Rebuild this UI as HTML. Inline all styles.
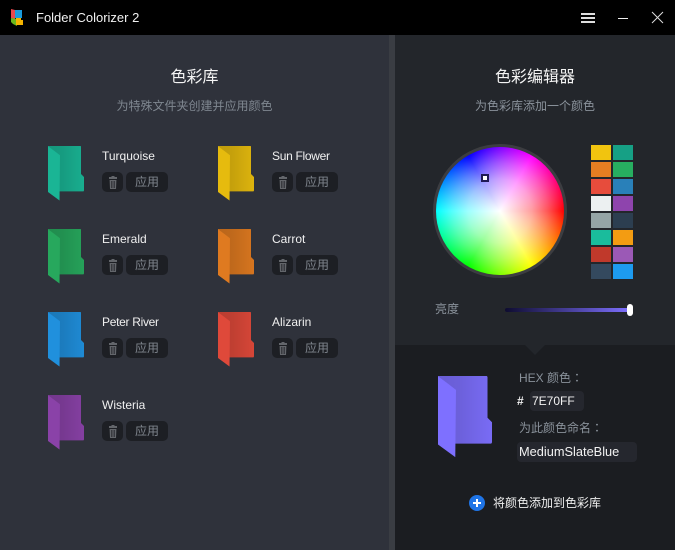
<!DOCTYPE html>
<html><head><meta charset="utf-8">
<style>
*{margin:0;padding:0;box-sizing:border-box}
html,body{width:675px;height:550px;overflow:hidden;background:#000}
body{position:relative;font-family:"Liberation Sans","Noto Sans CJK SC",sans-serif;color:#fff}
.a{position:absolute}
.t{position:absolute;white-space:nowrap;line-height:16px}
.c{text-align:center}
.b{position:absolute;background:#1d1f24;border-radius:5px;height:20px}
.ap{position:absolute;width:42px;height:20px;background:#1d1f24;border-radius:5px;color:#7f858d;font-size:12px;line-height:21px;text-align:center}
.s{position:absolute;width:20px;height:15px}
.tc{font-family:"Noto Sans CJK TC",sans-serif}
.f{position:absolute;width:36px;height:55px}
.f i{position:absolute;left:0;top:0;width:100%;height:100%;display:block}
.f .k{background:linear-gradient(90deg,rgba(0,0,0,.17),rgba(0,0,0,.14) 40%,rgba(0,0,0,.04)),var(--c);clip-path:polygon(0 0,90.3% 0,91.7% 1%,91.7% 50.9%,100% 56.4%,100% 81%,98.6% 82.4%,30.6% 82.4%,30.6% 16.4%)}
.f .p{background:var(--c);clip-path:polygon(0 0,33.3% 16.9%,32% 99%,0 83.6%)}
</style></head><body>
<div class="a" style="left:0;top:0;width:675px;height:35px;background:#000"></div>
<svg class="a" style="left:10px;top:8px" width="15" height="19" viewBox="0 0 15 19">
<path d="M1 1L5 2V11L1 10Z" fill="#e8474c"/><path d="M5 2H12V10H5Z" fill="#1a9bdc"/><path d="M1 10L7 11V18L3 16L1 14Z" fill="#6ab81c"/><path d="M6 10H11V12H13V17H6Z" fill="#f4b400"/>
</svg>
<div class="t" style="left:36px;top:10px;font-size:13px;color:#f2f2f2">Folder Colorizer 2</div>
<div class="a" style="left:581px;top:13px;width:14px;height:2px;background:#ddd"></div>
<div class="a" style="left:581px;top:17px;width:14px;height:2px;background:#ddd"></div>
<div class="a" style="left:581px;top:21px;width:14px;height:2px;background:#ddd"></div>
<div class="a" style="left:618px;top:18px;width:10px;height:1px;background:#eee"></div>
<svg class="a" style="left:651px;top:11px" width="13" height="13" viewBox="0 0 13 13"><path d="M1 1L12 12M12 1L1 12" stroke="#ddd" stroke-width="1"/></svg>

<div class="a" style="left:0;top:35px;width:389px;height:515px;background:#2f323b"></div>
<div class="a" style="left:389px;top:35px;width:6px;height:515px;background:#3a3d43"></div>
<div class="a" style="left:395px;top:35px;width:280px;height:310px;background:#23262b"></div>
<div class="a" style="left:395px;top:345px;width:280px;height:205px;background:#1b1d21"></div>
<div class="a" style="left:525px;top:345px;width:0;height:0;border-left:10px solid transparent;border-right:10px solid transparent;border-top:10px solid #23262b"></div>

<div class="t c" style="left:0;top:70px;width:389px;font-size:16px;color:#f4f4f4">色彩库</div>
<div class="t c" style="left:0;top:98px;width:389px;font-size:12px;color:#7f8790">为特殊文件夹创建并应用颜色</div>
<div class="t c" style="left:395px;top:70px;width:280px;font-size:16px;color:#f4f4f4">色彩编辑器</div>
<div class="t c" style="left:395px;top:98px;width:280px;font-size:12px;color:#8a929b">为色彩库添加一个颜色</div>

<svg width="0" height="0" style="position:absolute">
<defs>
<symbol id="tr" viewBox="0 0 8 13">
<path d="M2.5 0H5.5V1H8V3H0V1H2.5ZM.6 4H7.4L7 13H1Z" fill="#63666b"/>
<path d="M2.6 5V12M4 5V12M5.4 5V12" stroke="#1d1f24" stroke-width=".6"/>
</symbol>
</defs>
</svg>

<!-- Turquoise -->
<div class="f" style="left:48px;top:146px;--c:#1ab595"><i class="k"></i><i class="p"></i></div>
<div class="t" style="left:102px;top:148px;font-size:12px;color:#f0f0f0">Turquoise</div>
<div class="b" style="left:102px;top:172px;width:21px"></div><svg class="a" style="left:109px;top:176px" width="8" height="13"><use href="#tr"/></svg>
<div class="ap" style="left:126px;top:172px">应用</div>
<!-- Emerald -->
<div class="f" style="left:48px;top:229px;--c:#27a85d"><i class="k"></i><i class="p"></i></div>
<div class="t" style="left:102px;top:231px;font-size:12px;color:#f0f0f0">Emerald</div>
<div class="b" style="left:102px;top:255px;width:21px"></div><svg class="a" style="left:109px;top:259px" width="8" height="13"><use href="#tr"/></svg>
<div class="ap" style="left:126px;top:255px">应用</div>
<!-- Peter River -->
<div class="f" style="left:48px;top:312px;--c:#2090dd"><i class="k"></i><i class="p"></i></div>
<div class="t" style="left:102px;top:314px;font-size:12px;letter-spacing:-.3px;color:#f0f0f0">Peter River</div>
<div class="b" style="left:102px;top:338px;width:21px"></div><svg class="a" style="left:109px;top:342px" width="8" height="13"><use href="#tr"/></svg>
<div class="ap" style="left:126px;top:338px">应用</div>
<!-- Wisteria -->
<div class="f" style="left:48px;top:395px;--c:#8a42a8"><i class="k"></i><i class="p"></i></div>
<div class="t" style="left:102px;top:397px;font-size:12px;color:#f0f0f0">Wisteria</div>
<div class="b" style="left:102px;top:421px;width:21px"></div><svg class="a" style="left:109px;top:425px" width="8" height="13"><use href="#tr"/></svg>
<div class="ap" style="left:126px;top:421px">应用</div>
<!-- Sun Flower -->
<div class="f" style="left:218px;top:146px;--c:#e6bb0e"><i class="k"></i><i class="p"></i></div>
<div class="t" style="left:272px;top:148px;font-size:12px;letter-spacing:-.3px;color:#f0f0f0">Sun Flower</div>
<div class="b" style="left:272px;top:172px;width:21px"></div><svg class="a" style="left:279px;top:176px" width="8" height="13"><use href="#tr"/></svg>
<div class="ap" style="left:296px;top:172px">应用</div>
<!-- Carrot -->
<div class="f" style="left:218px;top:229px;--c:#df7a20"><i class="k"></i><i class="p"></i></div>
<div class="t" style="left:272px;top:231px;font-size:12px;color:#f0f0f0">Carrot</div>
<div class="b" style="left:272px;top:255px;width:21px"></div><svg class="a" style="left:279px;top:259px" width="8" height="13"><use href="#tr"/></svg>
<div class="ap" style="left:296px;top:255px">应用</div>
<!-- Alizarin -->
<div class="f" style="left:218px;top:312px;--c:#df493a"><i class="k"></i><i class="p"></i></div>
<div class="t" style="left:272px;top:314px;font-size:12px;color:#f0f0f0">Alizarin</div>
<div class="b" style="left:272px;top:338px;width:21px"></div><svg class="a" style="left:279px;top:342px" width="8" height="13"><use href="#tr"/></svg>
<div class="ap" style="left:296px;top:338px">应用</div>

<!-- Wheel -->
<div class="a" style="left:433px;top:144px;width:134px;height:134px;border-radius:50%;background:#3c3d41"></div>
<div class="a" style="left:436px;top:147px;width:128px;height:128px;border-radius:50%;background:radial-gradient(circle closest-side,#fff,rgba(255,255,255,.62) 50%,rgba(255,255,255,.33) 75%,rgba(255,255,255,0)),conic-gradient(from 90deg,#f00,#ff0,#0f0,#0ff,#00f,#f0f,#f00)"></div>
<div class="a" style="left:481px;top:174px;width:8px;height:8px;background:#fff;border:2px solid #1f1a55"></div>

<!-- Swatches -->
<div class="s" style="left:591px;top:145px;background:#f1c40f"></div><div class="s" style="left:613px;top:145px;background:#16a085"></div>
<div class="s" style="left:591px;top:162px;background:#e67e22"></div><div class="s" style="left:613px;top:162px;background:#27ae60"></div>
<div class="s" style="left:591px;top:179px;background:#e74c3c"></div><div class="s" style="left:613px;top:179px;background:#2980b9"></div>
<div class="s" style="left:591px;top:196px;background:#ecf0f1"></div><div class="s" style="left:613px;top:196px;background:#8e44ad"></div>
<div class="s" style="left:591px;top:213px;background:#95a5a6"></div><div class="s" style="left:613px;top:213px;background:#2c3e50"></div>
<div class="s" style="left:591px;top:230px;background:#1abc9c"></div><div class="s" style="left:613px;top:230px;background:#f39c12"></div>
<div class="s" style="left:591px;top:247px;background:#c0392b"></div><div class="s" style="left:613px;top:247px;background:#9b59b6"></div>
<div class="s" style="left:591px;top:264px;background:#34495e"></div><div class="s" style="left:613px;top:264px;background:#1d9bf0"></div>

<!-- Brightness -->
<div class="t" style="left:435px;top:301px;font-size:12px;color:#8a929b">亮度</div>
<div class="a" style="left:505px;top:308px;width:125px;height:4px;border-radius:2px;background:linear-gradient(90deg,#0e0c30,#7e70ff)"></div>
<div class="a" style="left:627px;top:304px;width:6px;height:12px;border-radius:3px;background:#fff"></div>

<!-- Editor -->
<div class="f" style="left:438px;top:376px;width:54px;height:82px;--c:#7e70ff"><i class="k"></i><i class="p"></i></div>
<div class="t" style="left:519px;top:370px;font-size:12px;color:#8a929b">HEX 颜色<span class="tc">：</span></div>
<div class="t" style="left:517px;top:393px;font-size:12px;font-weight:bold;color:#eee">#</div>
<div class="a" style="left:530px;top:391px;width:54px;height:20px;background:#25272e;border-radius:4px;padding-left:2px;font-size:12px;line-height:20px;color:#f2f2f2">7E70FF</div>
<div class="t" style="left:519px;top:420px;font-size:12px;color:#8a929b">为此颜色命名<span class="tc">：</span></div>
<div class="a" style="left:517px;top:442px;width:120px;height:20px;background:#25272e;border-radius:4px;padding-left:2px;font-size:12.8px;line-height:20px;color:#f2f2f2;white-space:nowrap">MediumSlateBlue</div>

<div class="a" style="left:469px;top:495px;width:16px;height:16px;border-radius:50%;background:#1f74e6"></div>
<div class="a" style="left:473px;top:502px;width:8px;height:2px;background:#fff"></div>
<div class="a" style="left:476px;top:499px;width:2px;height:8px;background:#fff"></div>
<div class="t" style="left:493px;top:495px;font-size:12px;color:#eee">将颜色添加到色彩库</div>
</body></html>
